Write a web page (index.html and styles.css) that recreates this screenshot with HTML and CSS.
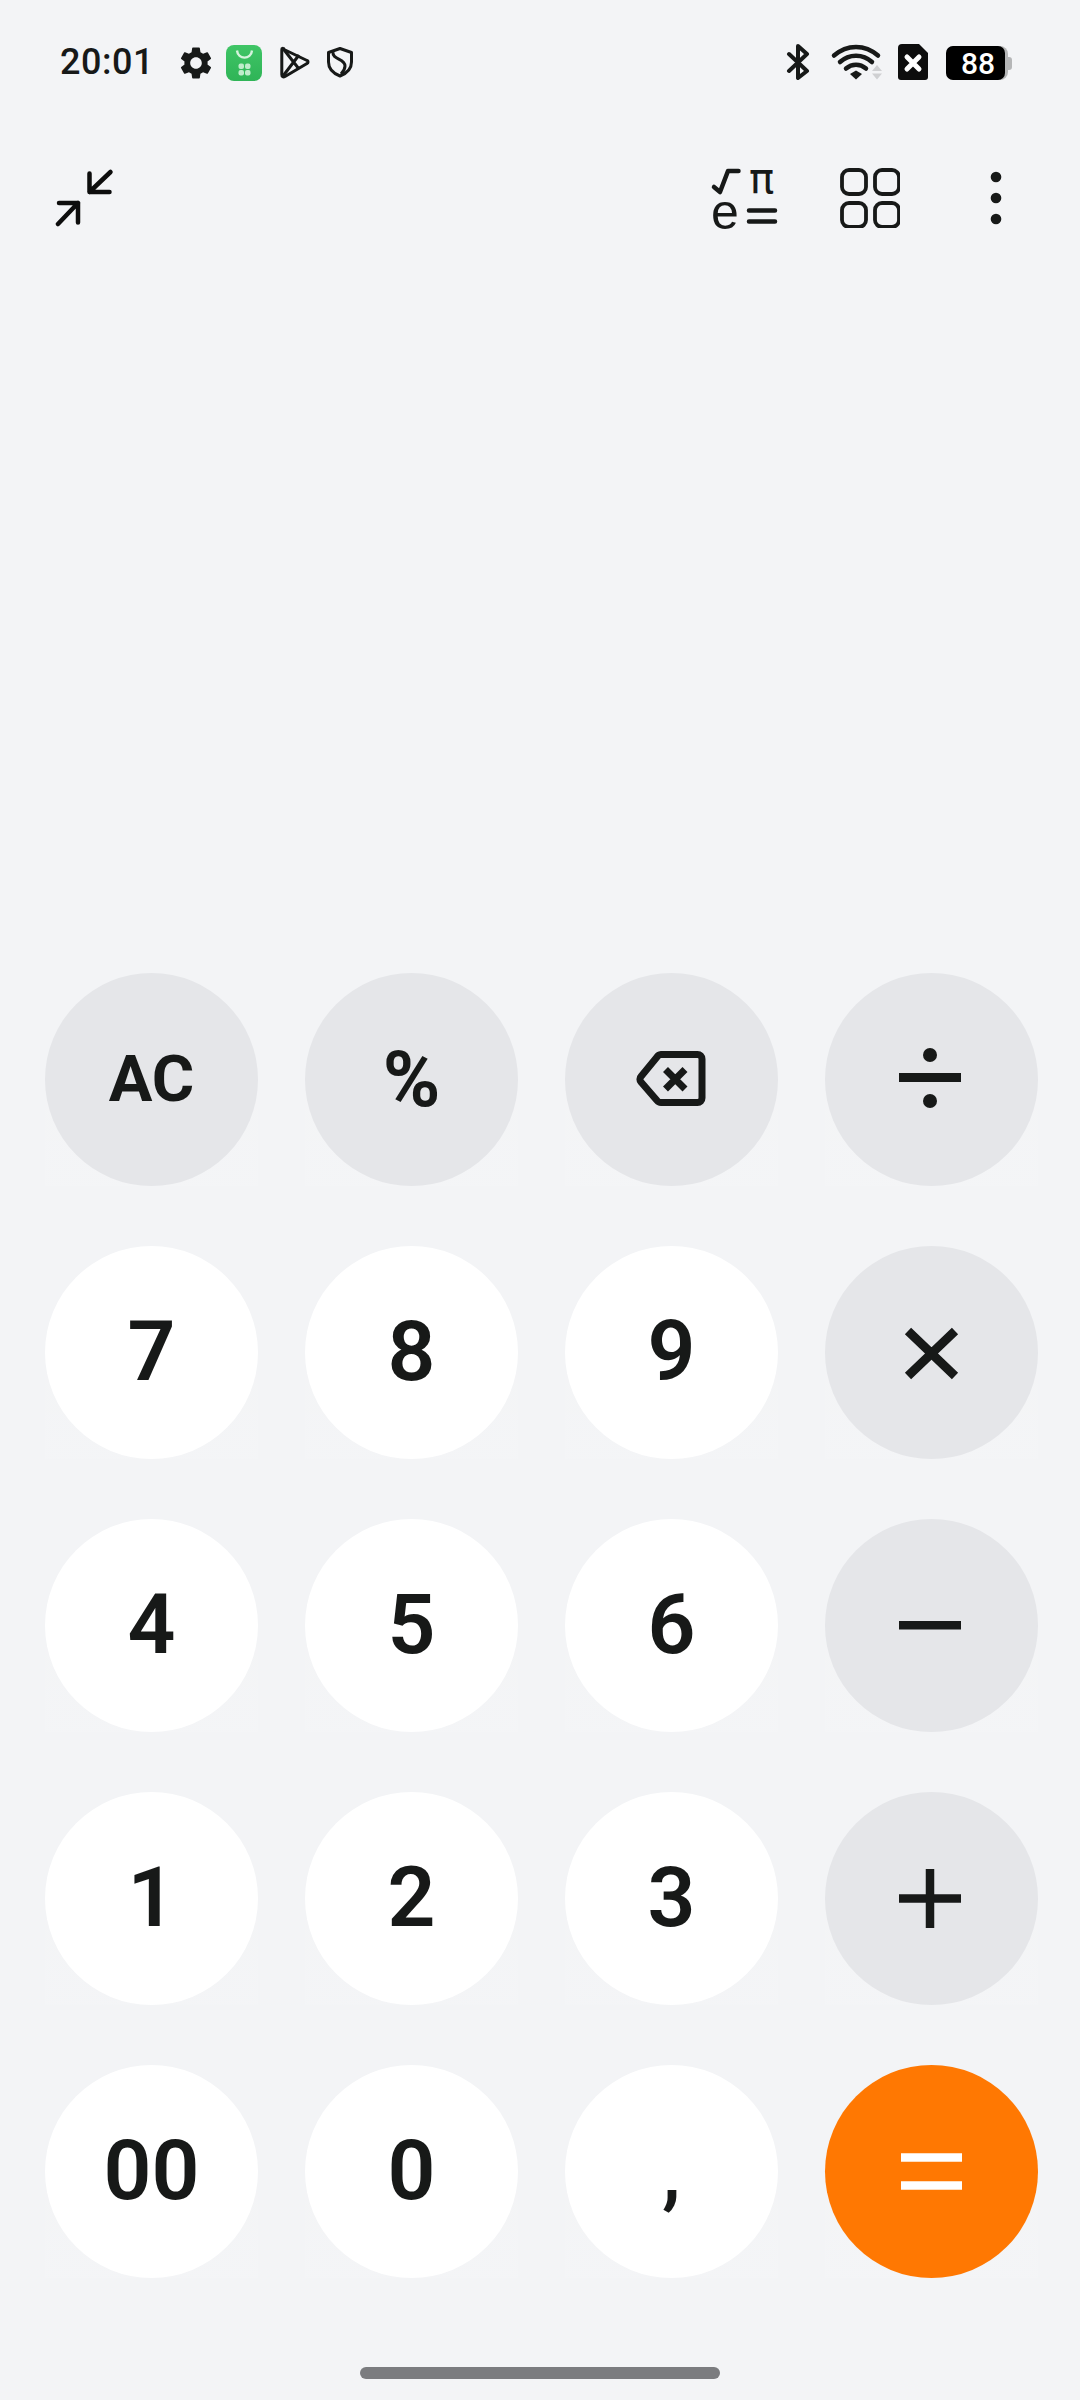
FILE: index.html
```html
<!DOCTYPE html>
<html>
<head>
	<title>Calculator</title>
	<meta charset="UTF-8">
	<link rel="stylesheet" href="styles.css">
</head>
<body>
<div class="phone">
	<div class="statusbar">
		<div class="status-left">
			<span class="time">20:01</span>
			<svg class="st-icon" width="32" height="36" viewBox="2.08 0.23 19.84 22.3"><path fill="#171918" d="M19.14 12.94c.04-.3.06-.61.06-.94 0-.32-.02-.64-.07-.94l2.03-1.58a.49.49 0 0 0 .12-.61l-1.92-3.32a.488.488 0 0 0-.59-.22l-2.39.96c-.5-.38-1.03-.7-1.62-.94l-.36-2.54a.484.484 0 0 0-.48-.41h-3.84c-.24 0-.43.17-.47.41l-.36 2.54c-.59.24-1.13.57-1.62.94l-2.39-.96c-.22-.08-.47 0-.59.22L2.74 8.87c-.12.21-.08.47.12.61l2.03 1.58c-.05.3-.09.63-.09.94s.02.64.07.94l-2.03 1.58a.49.49 0 0 0-.12.61l1.92 3.32c.12.22.37.29.59.22l2.39-.96c.5.38 1.03.7 1.62.94l.36 2.54c.05.24.24.41.48.41h3.84c.24 0 .44-.17.47-.41l.36-2.54c.59-.24 1.13-.56 1.62-.94l2.39.96c.22.08.47 0 .59-.22l1.92-3.32c.12-.22.07-.47-.12-.61l-2.01-1.58zM12 15.6c-1.98 0-3.6-1.62-3.6-3.6s1.62-3.6 3.6-3.6 3.6 1.62 3.6 3.6-1.62 3.6-3.6 3.6z"/></svg>
			<svg class="st-icon" width="36" height="37" viewBox="226 44 36 37">
				<defs><linearGradient id="store" x1="0" y1="0" x2="0" y2="1"><stop offset="0" stop-color="#3fc566"/><stop offset="1" stop-color="#2fb457"/></linearGradient></defs>
				<rect x="226" y="45" width="36" height="36" rx="8" fill="url(#store)"/>
				<path d="M237 50.500c1 9.500 14 9.500 15 0" fill="none" stroke="#d5f3dd" stroke-width="2.400"/>
				<g fill="#bfeccb"><rect x="238.500" y="63.500" width="5.500" height="5.500" rx="2"/><rect x="245" y="63.500" width="5.500" height="5.500" rx="2"/><rect x="238.500" y="70" width="5.500" height="5.500" rx="2"/><rect x="245" y="70" width="5.500" height="5.500" rx="2"/></g>
			</svg>
			<svg class="st-icon" width="36" height="36" viewBox="276 45 36 36">
				<path d="M282 49.500L307 61.500a1.600 1.600 0 0 1 0 3L285 77.500c-2 1-3.200 0-3.200-2V51c0-1.500.8-2 1.800-1.500z" fill="none" stroke="#171918" stroke-width="3" stroke-linejoin="round"/>
				<path d="M283 49.500L299 70M283 77L299 56" fill="none" stroke="#171918" stroke-width="3"/>
			</svg>
			<svg class="st-icon" width="28" height="36" viewBox="326 45 28 36">
				<path d="M340 49.500L351.500 53.500V63c0 7-5 11.500-11.500 14c-6.500-2.500-11.500-7-11.500-14V53.500z" fill="none" stroke="#171918" stroke-width="3" stroke-linejoin="round"/>
				<path d="M333 53c-1 8 12 6 12 14c0 3-2 6-4 8" fill="none" stroke="#171918" stroke-width="3"/>
			</svg>
		</div>
		<div class="status-right">
			<svg width="28" height="36" viewBox="784 44 28 36">
				<path d="M789 54L807 71L798 78V46L807 54L789 71" fill="none" stroke="#171918" stroke-width="4" stroke-linejoin="round" stroke-linecap="round"/>
			</svg>
			<svg width="54" height="36" viewBox="828 44 54 36">
				<g fill="none" stroke="#171918" stroke-width="4.500" stroke-linecap="round">
					<path d="M834 55.500C847 44 865 44 878 55.500"/>
					<path d="M840 62C849 53.500 863 53.500 872 62"/>
					<path d="M846 68.500C852 63.500 860 63.500 866 68.500"/>
				</g>
				<path d="M850 74L856 70.500L862 74L856 79.500z" fill="#171918"/>
				<path d="M872 71L877 65L882 71zM872 73.500H882L877 79.500z" fill="#cfd0d2"/>
			</svg>
			<svg width="32" height="36" viewBox="898 44 32 36">
				<path d="M902 44H919L928 53V77a3 3 0 0 1-3 3H901a3 3 0 0 1-3-3V48a4 4 0 0 1 4-4z" fill="#0d0d0d"/>
				<path d="M907 57L919 69M919 57L907 69" stroke="#fff" stroke-width="5" stroke-linecap="round"/>
			</svg>
			<div class="battery">
				<div class="battery-case"><div class="battery-level">88</div></div>
				<div class="battery-cap"></div>
			</div>
		</div>
	</div>

	<div class="toolbar">
		<svg width="60" height="62" viewBox="55 166 60 62">
			<g fill="none" stroke="#0d0d0d" stroke-width="4.500" stroke-linecap="round" stroke-linejoin="round">
				<path d="M89.500 173.500V192H109.500M89.500 192L110.500 172"/>
				<path d="M59 203H78V222.500M78 203L58 224"/>
			</g>
		</svg>
		<div class="tool-right">
			<svg class="tool-math" width="68" height="96" viewBox="710 149 68 96">
				<path d="M714 187L720 192L728 171H738.500" fill="none" stroke="#171918" stroke-width="4.500" stroke-linejoin="round" stroke-linecap="round"/>
				<text x="749" y="193" class="math-text math-pi">π</text>
				<text x="711" y="229" class="math-text math-e">e</text>
				<path d="M749 210.500H775M749 221.500H775" stroke="#171918" stroke-width="4.500" stroke-linecap="round"/>
			</svg>
			<svg class="tool-grid" width="60" height="62" viewBox="840 166 60 62">
				<g fill="none" stroke="#171918" stroke-width="3.800">
					<rect x="842" y="170" width="24" height="24" rx="7"/>
					<rect x="875" y="170" width="24" height="24" rx="7"/>
					<rect x="842" y="203" width="24" height="24" rx="7"/>
					<rect x="875" y="203" width="24" height="24" rx="7"/>
				</g>
			</svg>
			<svg class="tool-more" width="12" height="62" viewBox="990 166 12 62">
				<g fill="#171918"><circle cx="996" cy="177" r="5.300"/><circle cx="996" cy="198" r="5.300"/><circle cx="996" cy="219" r="5.300"/></g>
			</svg>
		</div>
	</div>

	<div class="display"></div>

	<div class="keypad">
		<button class="key op key-label">AC</button>
		<button class="key op key-percent">%</button>
		<button class="key op">
			<svg width="213" height="213" viewBox="565 973 213 213">
				<path d="M702 1061V1098a4.500 4.500 0 0 1-4.500 4.500H661a5 5 0 0 1-4-2L641 1082a4 4 0 0 1 0-5.500L657 1057a5 5 0 0 1 4-2.500H697.500a4.500 4.500 0 0 1 4.500 4.500z" fill="none" stroke="#171918" stroke-width="7" stroke-linejoin="round"/>
				<path d="M665.500 1069.500L685 1089M685 1069.500L665.500 1089" stroke="#171918" stroke-width="7"/>
			</svg>
		</button>
		<button class="key op">
			<svg width="213" height="213" viewBox="825 973 213 213">
				<rect x="899" y="1073" width="62" height="9" fill="#171918"/>
				<circle cx="930" cy="1055" r="7" fill="#171918"/>
				<circle cx="930" cy="1101" r="7" fill="#171918"/>
			</svg>
		</button>

		<button class="key">7</button>
		<button class="key">8</button>
		<button class="key">9</button>
		<button class="key op">
			<svg width="213" height="213" viewBox="825 1246 213 213">
				<path d="M908 1331L955 1376M955 1331L908 1376" stroke="#171918" stroke-width="9"/>
			</svg>
		</button>

		<button class="key">4</button>
		<button class="key">5</button>
		<button class="key">6</button>
		<button class="key op">
			<svg width="213" height="213" viewBox="825 1519 213 213">
				<rect x="899" y="1621" width="62" height="8.500" fill="#171918"/>
			</svg>
		</button>

		<button class="key">1</button>
		<button class="key">2</button>
		<button class="key">3</button>
		<button class="key op">
			<svg width="213" height="213" viewBox="825 1792 213 213">
				<path d="M899 1898.500H961" stroke="#171918" stroke-width="8.500"/>
				<path d="M930 1869V1928" stroke="#171918" stroke-width="8.500"/>
			</svg>
		</button>

		<button class="key">00</button>
		<button class="key">0</button>
		<button class="key key-comma">,</button>
		<button class="key equals">
			<svg width="213" height="213" viewBox="825 2065 213 213">
				<path d="M901 2157.500H962M901 2185.500H962" stroke="#fff" stroke-width="8.500"/>
			</svg>
		</button>
	</div>

	<div class="navbar"><div class="home-bar"></div></div>
</div>
</body>
</html>
```

FILE: styles.css
```css
* { box-sizing: border-box; }
html, body { margin: 0; padding: 0; }
body { background: #f3f4f6; font-family: Roboto, "Liberation Sans", sans-serif; color: #171918; }

.phone { width: 1080px; height: 2400px; display: flex; flex-direction: column; }

/* status bar */
.statusbar { height: 124px; display: flex; justify-content: space-between; align-items: center; padding: 0 68px 0 60px; }
.status-left, .status-right { display: flex; align-items: center; }
.status-left { gap: 14px; }
.status-right { gap: 16px; }
.status-left svg, .status-right svg { display: block; }
.time { width: 106px; font-size: 36px; font-weight: 500; line-height: 36px; letter-spacing: 0.5px; }

.battery { display: flex; align-items: center; margin-top: 2px; }
.battery-case { width: 62px; height: 34px; background: #b5b6b7; border-radius: 8px; }
.battery-level { width: 59px; height: 34px; background: #000; border-radius: 7px; color: #fff; font-size: 30px; font-weight: 500; line-height: 35px; text-align: center; padding-left: 5px; }
.battery-cap { width: 4px; height: 13px; background: #b5b6b7; border-radius: 0 3px 3px 0; }

/* toolbar */
.toolbar { height: 146px; display: flex; justify-content: space-between; align-items: center; padding: 0 78px 0 55px; }
.toolbar svg { display: block; }
.tool-right { display: flex; align-items: center; }
.tool-math { margin-right: 62px; }
.tool-grid { margin-right: 90px; }
.math-text { fill: #171918; }
.math-pi { font-family: "DejaVu Sans", sans-serif; font-size: 42px; }
.math-e { font-family: "Liberation Sans", sans-serif; font-size: 50px; }

.display { flex: 1; }

/* keys */
.keypad { display: grid; grid-template-columns: repeat(4, 213px); grid-auto-rows: 213px; column-gap: 47px; row-gap: 60px; padding-left: 45px; }
.key { position: relative; width: 213px; height: 213px; padding: 0 0 2px; border: 0; border-radius: 50%; background: #fff; color: #171918; font-family: Roboto, "Liberation Sans", sans-serif; font-size: 84px; font-weight: 650; line-height: 1; display: flex; align-items: center; justify-content: center; }
/* very faint square left behind each round key */
.key::before { content: ""; position: absolute; inset: 0; z-index: -1; background: linear-gradient(to bottom, rgba(255,255,255,0), rgba(255,255,255,.07)); }
.key svg { display: block; margin-bottom: -2px; }
.key.op { background: #e5e6e9; }
.key.equals { background: #ff7802; }
.key-label { font-size: 65px; font-weight: 700; padding: 0; }
.key-percent { font-size: 78px; font-weight: 700; padding: 0; }
.key-comma { font-weight: 500; }

/* navigation bar */
.navbar { height: 122px; padding-top: 89px; display: flex; justify-content: center; }
.home-bar { width: 360px; height: 12px; background: #7b7c7f; border-radius: 6px; }
```
